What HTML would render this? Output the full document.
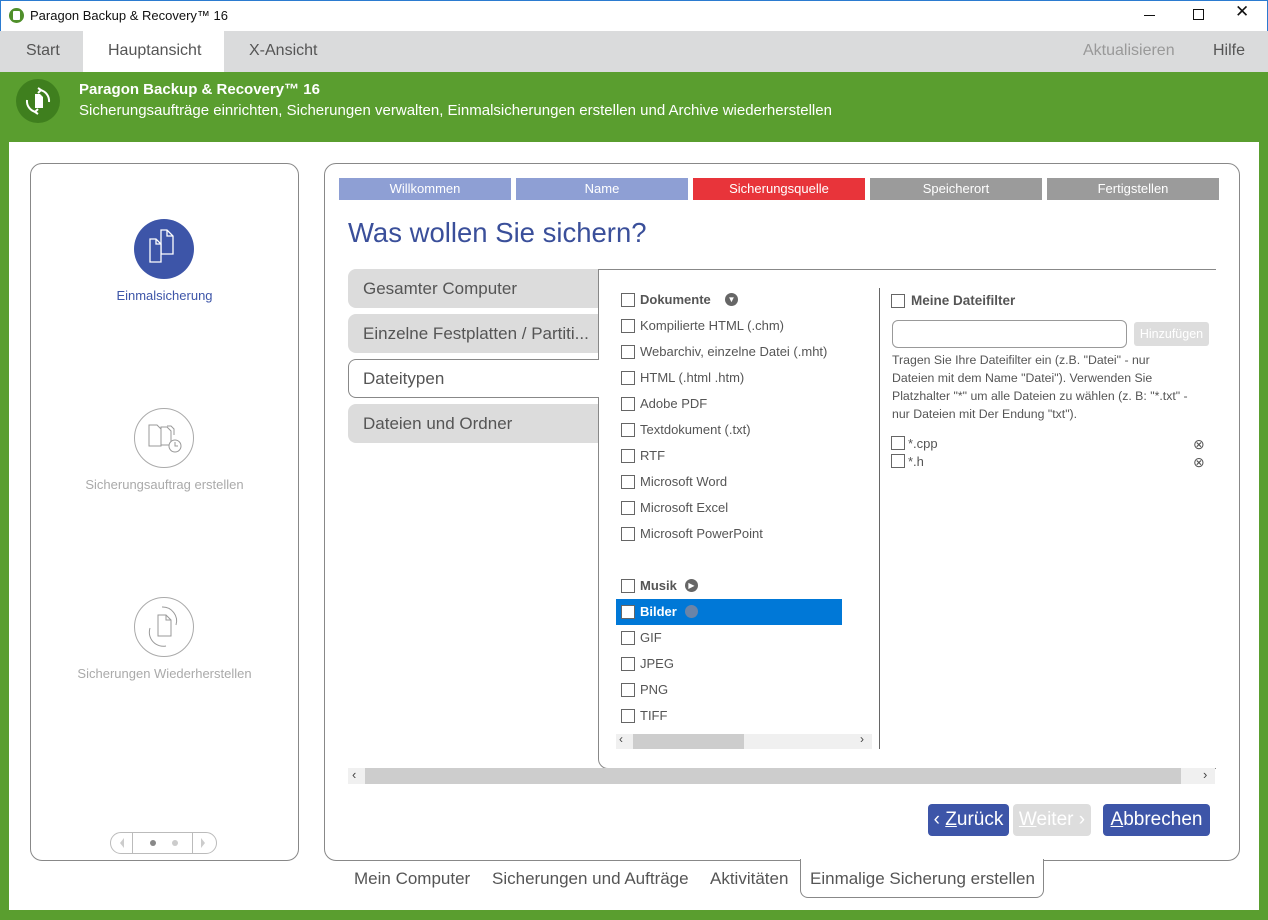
<!DOCTYPE html>
<html><head><meta charset="utf-8"><style>
*{box-sizing:border-box;margin:0;padding:0}
body{width:1268px;height:920px;position:relative;overflow:hidden;background:#fff;font-family:"Liberation Sans",sans-serif;color:#555}
.a{position:absolute}
.cb{position:absolute;width:14px;height:14px;border:1px solid #666;background:#fff}
.it{position:absolute;font-size:13px;color:#555;white-space:nowrap}
.step{position:absolute;top:178px;height:22px;width:172px;color:#fff;font-size:13px;text-align:center;line-height:22px}
.lt{position:absolute;left:348px;width:250px;height:39px;background:#dcdcdc;border-radius:8px 0 0 8px;font-size:17px;line-height:39px;padding-left:15px;color:#555}
.bt{position:absolute;top:869px;font-size:17px;color:#555;white-space:nowrap}
</style></head><body>
<!-- title bar -->
<div class="a" style="left:0;top:0;width:1268px;height:31px;background:#fff;border:1px solid #2b7bd0;border-bottom:none"></div>
<div class="a" style="left:9px;top:8px;width:15px;height:15px;border-radius:50%;background:#4f8f2a"></div>
<div class="a" style="left:13px;top:11px;width:7px;height:9px;background:#fff;border-radius:1px"></div>
<div class="a" style="left:30px;top:8px;font-size:13px;color:#111">Paragon Backup &amp; Recovery™ 16</div>
<div class="a" style="left:1144px;top:15px;width:11px;height:1px;background:#111"></div>
<div class="a" style="left:1193px;top:9px;width:11px;height:11px;border:1px solid #111"></div>
<div class="a" style="left:1235px;top:2px;font-size:17px;color:#111">✕</div>
<!-- tab bar -->
<div class="a" style="left:0;top:31px;width:1268px;height:41px;background:#dadbdc"></div>
<div class="a" style="left:83px;top:31px;width:141px;height:41px;background:#fff"></div>
<div class="a" style="left:26px;top:42px;font-size:16px;color:#555">Start</div>
<div class="a" style="left:108px;top:42px;font-size:16px;color:#555">Hauptansicht</div>
<div class="a" style="left:249px;top:42px;font-size:16px;color:#555">X-Ansicht</div>
<div class="a" style="left:1083px;top:42px;font-size:16px;color:#999">Aktualisieren</div>
<div class="a" style="left:1213px;top:42px;font-size:16px;color:#555">Hilfe</div>
<!-- green frame -->
<div class="a" style="left:0;top:72px;width:1268px;height:848px;background:#5a9e2f"></div>
<div class="a" style="left:9px;top:142px;width:1250px;height:768px;background:#fff"></div>
<div class="a" style="left:16px;top:79px;width:44px;height:44px;border-radius:50%;background:#3f7f1e"></div>
<svg class="a" style="left:16px;top:79px" width="44" height="44" viewBox="0 0 44 44" fill="none" stroke="#fff" stroke-width="2"><path d="M24 11a11 11 0 0 1 9 12"/><path d="M20 33a11 11 0 0 1 -9 -12"/><path d="M22 9l3 2-3 3" /><path d="M22 35l-3-2 3-3"/><path d="M19 15h5l3 3v11h-8z" fill="#fff" stroke="none"/></svg>
<div class="a" style="left:79px;top:81px;font-size:15px;font-weight:bold;color:#fff">Paragon Backup &amp; Recovery™ 16</div>
<div class="a" style="left:79px;top:102px;font-size:15px;color:#fff">Sicherungsaufträge einrichten, Sicherungen verwalten, Einmalsicherungen erstellen und Archive wiederherstellen</div>
<!-- left panel -->
<div class="a" style="left:30px;top:163px;width:269px;height:698px;border:1px solid #888;border-radius:12px"></div>
<div class="a" style="left:134px;top:219px;width:60px;height:60px;border-radius:50%;background:#3d55a8"></div>
<svg class="a" style="left:134px;top:219px" width="60" height="60" viewBox="0 0 60 60" fill="none" stroke="#fff" stroke-width="1.3"><path d="M27 11h6l6 6v18h-12z"/><path d="M33 11v6h6"/><path d="M16 20h6l5 5v18h-11z" fill="#3d55a8"/><path d="M22 20v5h5"/></svg>
<div class="a" style="left:30px;top:288px;width:269px;text-align:center;font-size:13px;color:#3d55a8">Einmalsicherung</div>
<div class="a" style="left:134px;top:408px;width:60px;height:60px;border-radius:50%;border:1px solid #aaa"></div>
<svg class="a" style="left:134px;top:408px" width="60" height="60" viewBox="0 0 60 60" fill="none" stroke="#999" stroke-width="1"><path d="M15 17h8l4 4v17h-12z"/><path d="M27 19h6l4 4v14h-10z"/><path d="M33 18h4l3 3v6"/><circle cx="41" cy="38" r="6" fill="#fff"/><path d="M41 34v4h3"/></svg>
<div class="a" style="left:30px;top:477px;width:269px;text-align:center;font-size:13px;color:#aaa">Sicherungsauftrag erstellen</div>
<div class="a" style="left:134px;top:597px;width:60px;height:60px;border-radius:50%;border:1px solid #aaa"></div>
<svg class="a" style="left:134px;top:597px" width="60" height="60" viewBox="0 0 60 60" fill="none" stroke="#999" stroke-width="1"><path d="M24 18h8l5 5v16h-13z" fill="#fff"/><path d="M32 18v5h5"/><path d="M28 10a14 14 0 0 1 14 18"/><path d="M32 49a14 14 0 0 1 -16 -18"/></svg>
<div class="a" style="left:30px;top:666px;width:269px;text-align:center;font-size:13px;color:#aaa">Sicherungen Wiederherstellen</div>
<div class="a" style="left:110px;top:832px;width:107px;height:22px;border:1px solid #bbb;border-radius:11px"></div>
<div class="a" style="left:132px;top:832px;height:22px;border-left:1px solid #bbb;border-right:1px solid #bbb;width:61px"></div>
<div class="a" style="left:150px;top:840px;width:6px;height:6px;border-radius:50%;background:#888"></div>
<div class="a" style="left:172px;top:840px;width:6px;height:6px;border-radius:50%;background:#ccc"></div>
<div class="a" style="left:120px;top:838px;width:0;height:0;border:5px solid transparent;border-right:4px solid #ccc;border-left:none"></div>
<div class="a" style="left:201px;top:838px;width:0;height:0;border:5px solid transparent;border-left:4px solid #ccc;border-right:none"></div>
<!-- right panel -->
<div class="a" style="left:324px;top:163px;width:916px;height:698px;border:1px solid #888;border-radius:12px"></div>
<div class="a" style="left:800px;top:859px;width:244px;height:39px;border:1px solid #888;border-top:none;border-radius:0 0 8px 8px;background:#fff"></div>
<div class="a" style="left:801px;top:858px;width:242px;height:3px;background:#fff"></div>
<div class="step" style="left:339px;background:#8e9fd4">Willkommen</div>
<div class="step" style="left:516px;background:#8e9fd4">Name</div>
<div class="step" style="left:693px;background:#e8343a">Sicherungsquelle</div>
<div class="step" style="left:870px;background:#9b9b9b">Speicherort</div>
<div class="step" style="left:1047px;background:#9b9b9b">Fertigstellen</div>
<div class="a" style="left:348px;top:217px;font-size:27.5px;color:#3a4f9a">Was wollen Sie sichern?</div>
<!-- content box -->
<div class="a" style="left:598px;top:269px;width:618px;height:500px;border-left:1px solid #888;border-top:1px solid #888;border-radius:0 0 0 10px;border-bottom:1px solid #888"></div>
<div class="lt" style="top:269px">Gesamter Computer</div>
<div class="lt" style="top:314px">Einzelne Festplatten / Partiti...</div>
<div class="lt" style="top:359px;background:#fff;border:1px solid #888;border-right:none;width:251px;line-height:37px;padding-left:14px">Dateitypen</div>
<div class="lt" style="top:404px">Dateien und Ordner</div>
<!-- list -->
<div class="a" style="left:616px;top:599px;width:226px;height:26px;background:#0078d7"></div>
<div class="cb" style="left:621px;top:293px"></div><div class="it" style="left:640px;top:292px;font-weight:bold">Dokumente</div>
<div class="a" style="left:725px;top:293px;width:13px;height:13px;border-radius:50%;background:#666;color:#fff;font-size:8px;text-align:center;line-height:13px">▼</div>
<div class="cb" style="left:621px;top:319px"></div><div class="it" style="left:640px;top:318px">Kompilierte HTML (.chm)</div>
<div class="cb" style="left:621px;top:345px"></div><div class="it" style="left:640px;top:344px">Webarchiv, einzelne Datei (.mht)</div>
<div class="cb" style="left:621px;top:371px"></div><div class="it" style="left:640px;top:370px">HTML (.html .htm)</div>
<div class="cb" style="left:621px;top:397px"></div><div class="it" style="left:640px;top:396px">Adobe PDF</div>
<div class="cb" style="left:621px;top:423px"></div><div class="it" style="left:640px;top:422px">Textdokument (.txt)</div>
<div class="cb" style="left:621px;top:449px"></div><div class="it" style="left:640px;top:448px">RTF</div>
<div class="cb" style="left:621px;top:475px"></div><div class="it" style="left:640px;top:474px">Microsoft Word</div>
<div class="cb" style="left:621px;top:501px"></div><div class="it" style="left:640px;top:500px">Microsoft Excel</div>
<div class="cb" style="left:621px;top:527px"></div><div class="it" style="left:640px;top:526px">Microsoft PowerPoint</div>
<div class="cb" style="left:621px;top:579px"></div><div class="it" style="left:640px;top:578px;font-weight:bold">Musik</div>
<div class="a" style="left:685px;top:579px;width:13px;height:13px;border-radius:50%;background:#666;color:#fff;font-size:8px;text-align:center;line-height:13px">▶</div>
<div class="cb" style="left:621px;top:605px"></div><div class="it" style="left:640px;top:604px;font-weight:bold;color:#fff">Bilder</div>
<div class="a" style="left:685px;top:605px;width:13px;height:13px;border-radius:50%;background:#6a84a8"></div>
<div class="cb" style="left:621px;top:631px"></div><div class="it" style="left:640px;top:630px">GIF</div>
<div class="cb" style="left:621px;top:657px"></div><div class="it" style="left:640px;top:656px">JPEG</div>
<div class="cb" style="left:621px;top:683px"></div><div class="it" style="left:640px;top:682px">PNG</div>
<div class="cb" style="left:621px;top:709px"></div><div class="it" style="left:640px;top:708px">TIFF</div>
<div class="a" style="left:616px;top:734px;width:256px;height:15px;background:#f0f0f0"></div>
<div class="a" style="left:633px;top:734px;width:111px;height:15px;background:#cdcdcd"></div>
<div class="a" style="left:619px;top:732px;font-size:12px;color:#444">‹</div>
<div class="a" style="left:860px;top:732px;font-size:12px;color:#444">›</div>
<div class="a" style="left:879px;top:288px;width:1px;height:461px;background:#666"></div>
<!-- right filters -->
<div class="cb" style="left:891px;top:294px"></div><div class="it" style="left:911px;top:293px;font-weight:bold;font-size:13.5px">Meine Dateifilter</div>
<div class="a" style="left:892px;top:320px;width:235px;height:28px;border:1px solid #999;border-radius:6px"></div>
<div class="a" style="left:1134px;top:322px;width:75px;height:24px;background:#ddd;border-radius:3px;color:#fff;font-size:12.5px;text-align:center;line-height:24px">Hinzufügen</div>
<div class="a" style="left:892px;top:351px;font-size:12.3px;line-height:18px;color:#555;white-space:nowrap">Tragen Sie Ihre Dateifilter ein (z.B. "Datei" - nur<br>Dateien mit dem Name "Datei"). Verwenden Sie<br>Platzhalter "*" um alle Dateien zu wählen (z. B: "*.txt" -<br>nur Dateien mit Der Endung "txt").</div>
<div class="cb" style="left:891px;top:436px"></div><div class="it" style="left:908px;top:436px">*.cpp</div>
<div class="cb" style="left:891px;top:454px"></div><div class="it" style="left:908px;top:454px">*.h</div>
<div class="a" style="left:1193px;top:436px;font-size:14px;color:#555">⊗</div>
<div class="a" style="left:1193px;top:454px;font-size:14px;color:#555">⊗</div>
<!-- outer scrollbar -->
<div class="a" style="left:348px;top:768px;width:867px;height:16px;background:#f0f0f0"></div>
<div class="a" style="left:365px;top:768px;width:816px;height:16px;background:#cdcdcd"></div>
<div class="a" style="left:352px;top:767px;font-size:13px;color:#444">‹</div>
<div class="a" style="left:1203px;top:767px;font-size:13px;color:#444">›</div>
<!-- buttons -->
<div class="a" style="left:928px;top:804px;width:81px;height:32px;background:#3d55a8;border-radius:4px;color:#fff;font-size:19px;line-height:32px;text-align:center">‹ <u>Z</u>urück</div>
<div class="a" style="left:1013px;top:804px;width:78px;height:32px;background:#ddd;border-radius:4px;color:#fff;font-size:19px;line-height:32px;text-align:center"><u>W</u>eiter ›</div>
<div class="a" style="left:1103px;top:804px;width:107px;height:32px;background:#3d55a8;border-radius:4px;color:#fff;font-size:19px;line-height:32px;text-align:center"><u>A</u>bbrechen</div>
<!-- bottom tabs -->
<div class="bt" style="left:354px">Mein Computer</div>
<div class="bt" style="left:492px">Sicherungen und Aufträge</div>
<div class="bt" style="left:710px">Aktivitäten</div>
<div class="bt" style="left:810px">Einmalige Sicherung erstellen</div>
</body></html>
